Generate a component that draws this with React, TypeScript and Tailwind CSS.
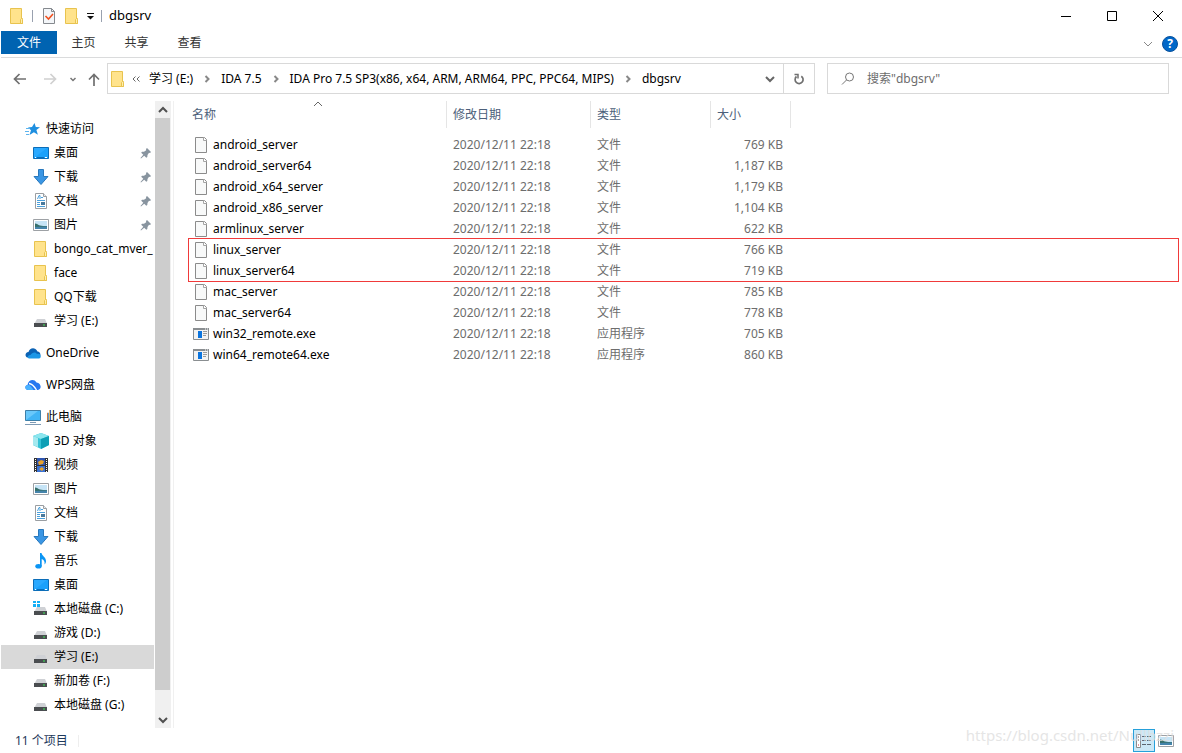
import { ReactNode } from 'react';

const files = [
  [
    { name: 'android_server', type: '文件', size: '769 KB' },
    { name: 'android_server64', type: '文件', size: '1,187 KB' },
    { name: 'android_x64_server', type: '文件', size: '1,179 KB' },
    { name: 'android_x86_server', type: '文件', size: '1,104 KB' },
    { name: 'armlinux_server', type: '文件', size: '622 KB' },
  ],
  [
    { name: 'linux_server', type: '文件', size: '766 KB' },
    { name: 'linux_server64', type: '文件', size: '719 KB' },
  ],
  [
    { name: 'mac_server', type: '文件', size: '785 KB' },
    { name: 'mac_server64', type: '文件', size: '778 KB' },
    { name: 'win32_remote.exe', type: '应用程序', size: '705 KB' },
    { name: 'win64_remote64.exe', type: '应用程序', size: '860 KB' },
  ],
];

const crumbs = ['学习 (E:)', 'IDA 7.5', 'IDA Pro 7.5 SP3(x86, x64, ARM, ARM64, PPC, PPC64, MIPS)', 'dbgsrv'];

const Svg = ({ children }: { children: ReactNode }) => (
  <svg width="16" height="16" viewBox="0 0 16 16" className="shrink-0" aria-hidden="true">
    {children}
  </svg>
);

const FolderIcon = () => (
  <Svg>
    <path d="M1.500.5h11v10h1v5h-12z" fill="#ffe38c" stroke="#e8c34e" />
    <path d="M11.500 15.500v-4l1-1 1 1v4z" fill="#ffefae" stroke="#e8c34e" />
  </Svg>
);

const CheckDocIcon = () => (
  <Svg>
    <path d="M2.500.5h8l3 3v12h-11z" fill="#f3f6f9" stroke="#85898e" />
    <path d="M10.500.5v3h3" fill="none" stroke="#85898e" />
    <path d="M4.500 8l3 3 4.500-5" fill="none" stroke="#f0501e" strokeWidth="1.600" />
  </Svg>
);

const FileIcon = () => (
  <Svg>
    <path d="M2.500.5h9l2 2v13h-11z" fill="#f8f9f9" stroke="#8b8b8b" />
    <path d="M10.500.5v3h3" fill="#fff" stroke="#a5a5a5" />
  </Svg>
);

const ExeIcon = () => (
  <Svg>
    <path d="M.5 2.500h15v11H.5z" fill="#f3f3f3" stroke="#8a8e91" />
    <path d="M0 2h16v2H0z" fill="#8a8e91" />
    <path d="M12 2.500h1v1h-1zM14 2.500h1v1h-1z" fill="#fff" />
    <path d="M5 5h4v7H5z" fill="#0b74de" />
    <path d="M10 5.500h4M10 7.500h4M10 9.500h3" stroke="#9a9a9a" />
  </Svg>
);

const StarIcon = () => (
  <Svg>
    <path d="M9.500 2l1.300 4 4.200.3-3.600 2.700 1.500 4.700-4-2.500-4.400 2.800 1.500-4.700L3 6.500l4-.5z" fill="#1e8fe0" />
    <path d="M1 7.500h4M0 10.500h4M1 13.500h3" stroke="#5db4ee" />
  </Svg>
);

const DesktopIcon = () => (
  <Svg>
    <path d="M.5 2.500h15v11H.5z" fill="#1ba1fb" stroke="#0b6db8" />
    <path d="M1 13L14 3H1z" fill="#2aa9ff" />
    <path d="M2 12.500h1M12 12.500h2" stroke="#fff" />
    <path d="M4 12.500h7" stroke="#0b6db8" />
  </Svg>
);

const DownloadIcon = () => (
  <Svg>
    <path d="M5.500.5h5v7h4.500L8 15.500 1 7.500h4.500z" fill="#3a96e4" stroke="#2878bd" />
  </Svg>
);

const DocIcon = () => (
  <Svg>
    <path d="M2.500.5h8l3 3v12h-11z" fill="#fff" stroke="#9a9ea2" />
    <path d="M10.500.5v3h3" fill="#e8ebee" stroke="#9a9ea2" />
    <path d="M4.500 6L6 2.500h1V6M8 4.500h2M4 7.500h8M4 9.500h3M4 11.500h3M4 13.500h8" fill="none" stroke="#4aa0dc" />
    <path d="M8 9h4v3H8z" fill="#49799c" />
  </Svg>
);

const PictureIcon = () => (
  <Svg>
    <path d="M.5 2.500h15v11H.5z" fill="#fff" stroke="#9da1a5" />
    <path d="M2 4h12v5H2z" fill="#c6e4f6" />
    <path d="M2 10V6.500c2 0 3 1.500 5 2s4 .5 7 .5v1z" fill="#37706c" />
    <path d="M2 12v-2l12-.5V12z" fill="#4584ab" />
  </Svg>
);

const DriveIcon = ({ system }: { system?: boolean }) => (
  <Svg>
    <path d="M4 6h8l2 4.500H1.500z" fill="#cfd1d5" />
    <path d="M1 10h13v4H1z" fill="#4a4d50" />
    <path d="M10 11.500h2v1h-2z" fill="#3bea57" />
    {system && <path d="M0 0h3v2H0zM4 0h3v2H4zM0 3h3v3H0zM4 3h3v3H4z" fill="#12aef5" />}
  </Svg>
);

const OneDriveIcon = () => (
  <Svg>
    <path d="M2.500 12.500C-.5 12 0 7 3.500 7 4.500 3 10 1.500 12.500 6.500c3 0 4.500 5 .5 6z" fill="#0b62b4" />
    <path d="M4 13.500c-2.500-.5-1-4 1.500-3.500C7 7 11 6.500 12 9c4-1 5 4 2 4.500z" fill="#1b96e6" />
  </Svg>
);

const WpsIcon = () => (
  <Svg>
    <path d="M3 13C-1 12.500 0 8 2.500 8 3 3 9 1 11.500 5.500 16.500 6 17 12.500 13 13z" fill="#2878f0" />
    <path d="M3 13c-4-.5-3-5 0-5 2.500 0 3.500 2 5.500 5z" fill="#49b2ff" />
    <path d="M4 6.500c3 0 5 2.500 7.500 6.500" fill="none" stroke="#fff" strokeWidth="1.300" />
  </Svg>
);

const ComputerIcon = () => (
  <Svg>
    <path d="M.5 1.500h15v10H.5z" fill="#41b4f5" stroke="#3d7fa8" />
    <path d="M1 11L13 2H1z" fill="#69c8fb" />
    <path d="M5 13.500h6M0 15.500h16" stroke="#7e9bb5" />
  </Svg>
);

const CubeIcon = () => (
  <Svg>
    <path d="M0 3l8-3 8 3v9l-8 4-8-4z" fill="#34c3d6" />
    <path d="M0 3l8-3 8 3-8 3z" fill="#8ce6ee" />
    <path d="M8 6l8-3v9l-8 4z" fill="#0e9fb5" />
    <path d="M0 3l5 2v9.300L0 12z" fill="#a5e9ef" />
  </Svg>
);

const VideoIcon = () => (
  <Svg>
    <path d="M1 1h14v14H1z" fill="#333" />
    <path d="M4 1h8v7H4z" fill="#2f55b0" />
    <path d="M4 9h8v6H4z" fill="#3a72d4" />
    <path d="M5 5l3-2 3 1-1 3-4 1zM6 12l3-2 2 2-2 2z" fill="#e9a32b" />
    <path d="M2.500 2v13M13.500 2v13" stroke="#fff" strokeDasharray="1 1" />
  </Svg>
);

const MusicIcon = () => (
  <Svg>
    <ellipse cx="5.500" cy="13.200" rx="3.200" ry="2.300" fill="#0b95f4" />
    <path d="M7 0h1.500c.5 3 4.500 4 4.500 8 0 1.500-.5 2.500-1.500 3.500.5-3-.5-4.500-2.800-5.500v7H7z" fill="#0b95f4" />
  </Svg>
);

const PinIcon = () => (
  <svg width="12" height="12" viewBox="0 0 12 12" className="ml-auto mr-[2px] shrink-0" aria-hidden="true">
    <path d="M7 1l4 4-1 1-1-.2L7.500 8l-.2 2-1 .8-2.100-2.100L1 11.500l-.5-.5 2.800-3.200L1.200 5.700 2 4.700l2 .1 2.200-1.600L6 2z" fill="#88949f" />
  </svg>
);

const SearchIcon = () => (
  <svg width="14" height="14" viewBox="0 0 14 14" className="shrink-0" aria-hidden="true">
    <circle cx="8.500" cy="5" r="4" fill="none" stroke="#777" />
    <path d="M5.500 8L1 12.500" stroke="#777" />
  </svg>
);

const Chevron = ({ d, width = 1, color = '#666' }: { d: 'down' | 'up' | 'right'; width?: number; color?: string }) => (
  <svg width="10" height="10" viewBox="0 0 10 10" className="shrink-0" aria-hidden="true">
    <path
      d={d === 'down' ? 'M1 3l4 4 4-4' : d === 'up' ? 'M1 7l4-4 4 4' : 'M3.500 2l3 3-3 3'}
      fill="none"
      stroke={color}
      strokeWidth={width}
    />
  </svg>
);

const Arrow = ({ color = '#707070', d }: { color?: string; d: string }) => (
  <svg width="14" height="14" viewBox="0 0 14 14" aria-hidden="true">
    <path d={d} fill="none" stroke={color} strokeWidth="1.700" />
  </svg>
);

type Item = { label: string; icon: ReactNode; pinned?: boolean; active?: boolean };

const groups: { root: Item; items: Item[] }[] = [
  {
    root: { label: '快速访问', icon: <StarIcon /> },
    items: [
      { label: '桌面', icon: <DesktopIcon />, pinned: true },
      { label: '下载', icon: <DownloadIcon />, pinned: true },
      { label: '文档', icon: <DocIcon />, pinned: true },
      { label: '图片', icon: <PictureIcon />, pinned: true },
      { label: 'bongo_cat_mver_', icon: <FolderIcon /> },
      { label: 'face', icon: <FolderIcon /> },
      { label: 'QQ下载', icon: <FolderIcon /> },
      { label: '学习 (E:)', icon: <DriveIcon /> },
    ],
  },
  { root: { label: 'OneDrive', icon: <OneDriveIcon /> }, items: [] },
  { root: { label: 'WPS网盘', icon: <WpsIcon /> }, items: [] },
  {
    root: { label: '此电脑', icon: <ComputerIcon /> },
    items: [
      { label: '3D 对象', icon: <CubeIcon /> },
      { label: '视频', icon: <VideoIcon /> },
      { label: '图片', icon: <PictureIcon /> },
      { label: '文档', icon: <DocIcon /> },
      { label: '下载', icon: <DownloadIcon /> },
      { label: '音乐', icon: <MusicIcon /> },
      { label: '桌面', icon: <DesktopIcon /> },
      { label: '本地磁盘 (C:)', icon: <DriveIcon system /> },
      { label: '游戏 (D:)', icon: <DriveIcon /> },
      { label: '学习 (E:)', icon: <DriveIcon />, active: true },
      { label: '新加卷 (F:)', icon: <DriveIcon /> },
      { label: '本地磁盘 (G:)', icon: <DriveIcon /> },
    ],
  },
];

const TitleBar = () => (
  <div className="flex h-[31px] items-center pl-2 pr-px">
    <FolderIcon />
    <span className="ml-[7px] h-3 w-px bg-gray-400" />
    <button aria-label="属性" className="ml-2"><CheckDocIcon /></button>
    <button aria-label="新建文件夹" className="ml-[7px]"><FolderIcon /></button>
    <button aria-label="自定义快速访问工具栏" className="ml-[6px]">
      <svg width="8" height="8" viewBox="0 0 8 8">
        <path d="M1 1.500h7" stroke="#111" />
        <path d="M1 4h7L4.500 7.500z" fill="#111" />
      </svg>
    </button>
    <span className="ml-[7px] h-3 w-px bg-gray-400" />
    <h1 className="ml-[7px] text-[13px]">dbgsrv</h1>
    <div className="ml-auto flex">
      <button aria-label="最小化" className="flex h-[31px] w-[46px] items-center justify-center">
        <svg width="10" height="10"><path d="M0 5.500h10" stroke="#000" /></svg>
      </button>
      <button aria-label="最大化" className="flex h-[31px] w-[46px] items-center justify-center">
        <svg width="10" height="10"><path d="M.5.5h9v9h-9z" fill="none" stroke="#000" /></svg>
      </button>
      <button aria-label="关闭" className="flex h-[31px] w-[46px] items-center justify-center">
        <svg width="10" height="10"><path d="M0 0l10 10M10 0L0 10" stroke="#000" /></svg>
      </button>
    </div>
  </div>
);

const Ribbon = () => (
  <div className="flex h-[27px] items-start border-b border-[#dadbdc]">
    <button className="h-[23px] w-14 bg-[#0063b1] text-white">文件</button>
    {['主页', '共享', '查看'].map((tab) => (
      <button key={tab} className="h-[24px] w-[53px] text-[#333]">{tab}</button>
    ))}
    <div className="ml-auto flex h-[26px] items-center gap-[9px] pr-1">
      <button aria-label="展开功能区"><Chevron d="down" color="#888" /></button>
      <button aria-label="帮助" className="flex size-4 items-center justify-center rounded-full border border-[#08519c] bg-[#0067c8] font-bold text-white">
        ?
      </button>
    </div>
  </div>
);

const AddressRow = () => (
  <div className="flex items-center pb-[7px] pl-3 pr-[13px] pt-[5px]">
    <button aria-label="后退" className="mr-4"><Arrow d="M13 7H2M6.500 2L1.500 7l5 5" /></button>
    <button aria-label="前进" className="mr-3"><Arrow color="#d0d0d0" d="M1 7h11M7.500 2l5 5-5 5" /></button>
    <button aria-label="最近浏览的位置" className="mr-[10px] flex w-2 justify-center">
      <svg width="8" height="8" viewBox="0 0 8 8"><path d="M1.500 3L4 5.500 6.500 3" fill="none" stroke="#777" strokeWidth="1.500" /></svg>
    </button>
    <button aria-label="上移" className="mr-[6px]"><Arrow d="M7 14V3M2 7.500l5-5 5 5" /></button>
    <nav className="flex h-[31px] min-w-0 flex-1 items-center border border-[#d9d9d9] pl-[2px]">
      <FolderIcon />
      <svg width="8" height="8" viewBox="0 0 8 8" className="ml-[6px] mr-[9px] shrink-0" aria-hidden="true">
        <path d="M3.500 1.500L1 4l2.500 2.500M7.500 1.500L5 4l2.500 2.500" fill="none" stroke="#666" />
      </svg>
      {crumbs.map((crumb, index) => (
        <div key={crumb} className="flex items-center whitespace-nowrap">
          <a href="#">{crumb}</a>
          {index < crumbs.length - 1 && (
            <span className="flex w-7 justify-center"><Chevron d="right" width={2} color="#888" /></span>
          )}
        </div>
      ))}
      <button aria-label="以前的位置" className="ml-auto flex h-full w-7 items-center justify-center border-r border-[#d9d9d9]">
        <Chevron d="down" width={2} />
      </button>
      <button aria-label="刷新" className="flex h-full w-[30px] items-center justify-center">
        <svg width="12" height="12" viewBox="0 0 12 12">
          <path d="M8.300 3.200A4 4 0 1 1 3.500 3.500" fill="none" stroke="#707070" strokeWidth="1.700" />
          <path d="M1.500 1.500h3.500v4" fill="none" stroke="#707070" strokeWidth="1.500" />
        </svg>
      </button>
    </nav>
    <label className="ml-3 flex h-[31px] w-[342px] items-center gap-3 border border-[#d9d9d9] pl-[13px] text-[#6d6d6d]">
      <SearchIcon />
      <input type="search" aria-label="搜索" placeholder={'搜索"dbgsrv"'} className="min-w-0 flex-1 outline-none placeholder:text-[#6d6d6d]" />
    </label>
  </div>
);

const TreeRow = ({ item, child }: { item: Item; child?: boolean }) => (
  <a
    href="#"
    className={`flex h-6 items-center gap-[5px] whitespace-nowrap ${child ? 'pl-8' : 'pl-6'} ${item.active ? 'bg-[#d9d9d9]' : ''}`}
  >
    {item.icon}
    {item.label}
    {item.pinned && <PinIcon />}
  </a>
);

const Sidebar = () => (
  <aside className="mr-[2px] flex w-[170px] shrink-0">
    <nav className="flex w-[153px] flex-col gap-2 overflow-hidden pt-4">
      {groups.map((group) => (
        <div key={group.root.label}>
          <TreeRow item={group.root} />
          {group.items.map((item, index) => (
            <TreeRow key={index} item={item} child />
          ))}
        </div>
      ))}
    </nav>
    <div className="ml-px flex w-4 flex-col bg-[#f0f0f0]">
      <button aria-label="向上滚动" className="flex h-[17px] items-center justify-center pr-px"><Chevron d="up" width={2} color="#505050" /></button>
      <div className="mr-px flex-1 bg-[#cdcdcd]" />
      <button aria-label="向下滚动" className="mt-[21px] flex h-[17px] items-center justify-center pr-px"><Chevron d="down" width={2} color="#505050" /></button>
    </div>
  </aside>
);

const FileTable = () => (
  <main className="min-w-0 flex-1 border-l border-[#f0f0f0] pl-[15px] pr-1">
    <table className="w-full table-fixed border-separate border-spacing-0">
      <colgroup>
        <col className="w-[258px]" />
        <col className="w-36" />
        <col className="w-[120px]" />
        <col className="w-20" />
        <col />
      </colgroup>
      <thead className="text-left text-[#4c607a]">
        <tr className="h-[27px]">
          <th className="relative border-r border-[#e5e5e5] p-0 pl-[3px] font-normal">
            名称
            <span className="absolute left-1/2 top-[-2px] -translate-x-1/2"><Chevron d="up" /></span>
          </th>
          <th className="border-r border-[#e5e5e5] p-0 pl-[6px] font-normal">修改日期</th>
          <th className="border-r border-[#e5e5e5] p-0 pl-[6px] font-normal">类型</th>
          <th className="border-r border-[#e5e5e5] p-0 pl-[6px] font-normal">大小</th>
          <td />
        </tr>
        <tr className="h-[6px]"><td colSpan={5} className="p-0" /></tr>
      </thead>
      {files.map((group, index) => (
        <tbody key={index} className={index === 1 ? 'outline outline-[#f03a3a]' : ''}>
          {group.map((file) => (
            <tr key={file.name} className="h-[21px] text-[#6d6d6d]">
              <td className="p-0 pl-1">
                <div className="flex items-center gap-1 text-black">
                  {file.name.endsWith('.exe') ? <ExeIcon /> : <FileIcon />}
                  {file.name}
                </div>
              </td>
              <td className="p-0 pl-[6px]">2020/12/11 22:18</td>
              <td className="p-0 pl-[6px]">{file.type}</td>
              <td className="p-0 pr-2 text-right">{file.size}</td>
              <td className="p-0" />
            </tr>
          ))}
        </tbody>
      ))}
    </table>
  </main>
);

const StatusBar = () => (
  <footer className="relative flex h-[25px] items-center pl-[14px] pr-2 text-[#1e395b]">
    <span>11 个项目</span>
    <span className="ml-[10px] h-3 w-px bg-[#eee]" />
    <div className="ml-auto flex items-center gap-[3px]">
      <button aria-label="详细信息" className="flex h-[23px] w-[22px] items-center justify-center border border-[#26a0da] bg-[#cbe8f6]">
        <svg width="16" height="14" viewBox="0 0 16 14">
          <path d="M.5.5h4v13h-4z" fill="#fff" stroke="#8b8b8b" />
          <path d="M2 3h1M2 6h1" stroke="#444" />
          <path d="M2 11h1" stroke="#e03030" />
          <path d="M6 2.500h4M11 2.500h4M6 6.500h4M11 6.500h4M6 10.500h4M11 10.500h4" stroke="#5b6670" />
        </svg>
      </button>
      <button aria-label="大缩略图"><PictureIcon /></button>
    </div>
    <span className="pointer-events-none absolute bottom-2 right-2 text-[15px] leading-5 text-[#dedede]/80">
      https://blog.csdn.net/Nullbzzi
    </span>
  </footer>
);

const App = () => {
  return (
    <div className="flex min-h-screen flex-col bg-white pl-px font-['Noto_Sans','Noto_Sans_CJK_SC',sans-serif] text-xs text-black">
      <TitleBar />
      <Ribbon />
      <AddressRow />
      <div className="flex flex-1">
        <Sidebar />
        <FileTable />
      </div>
      <StatusBar />
    </div>
  );
};

export default App;
